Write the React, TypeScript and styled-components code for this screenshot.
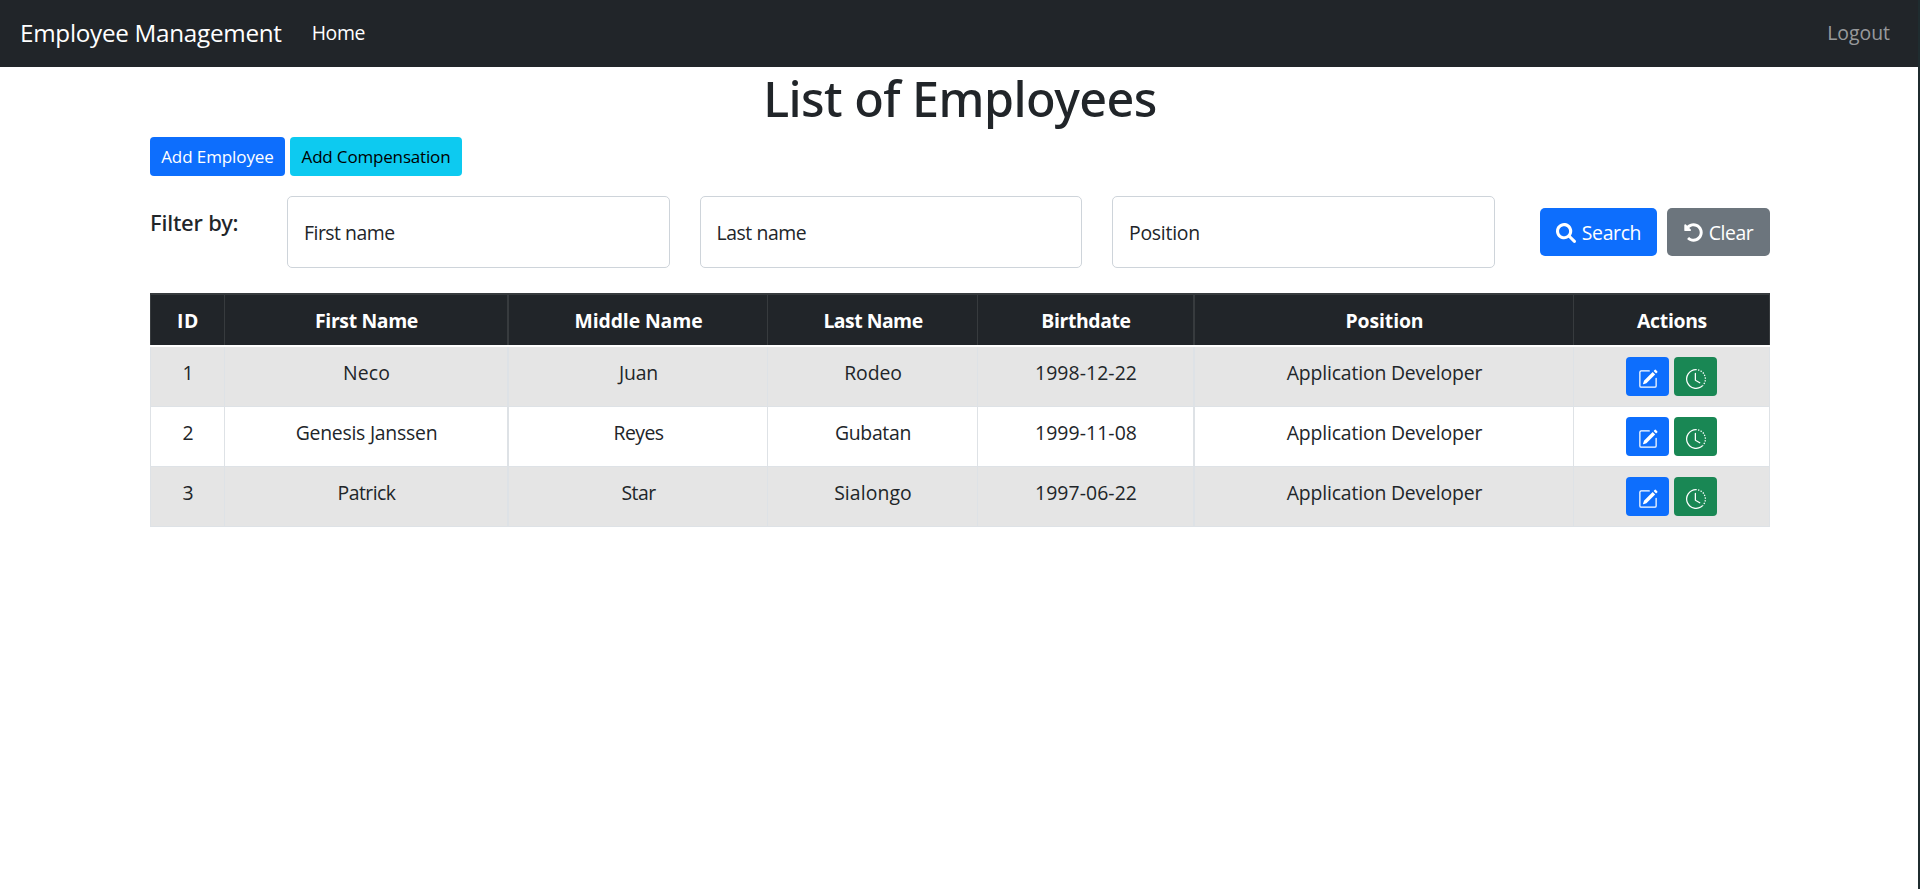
import React from "react";
import styled, { createGlobalStyle } from "styled-components";
import { BsClockHistory, BsPencilSquare } from "react-icons/bs";
import { FaUndoAlt } from "react-icons/fa";

const GlobalStyle = createGlobalStyle`
  *, *::before, *::after { box-sizing: border-box; }
  body {
    margin: 0;
    background: #fff;
    color: #212529;
    font-family: "Open Sans", "Noto Sans", sans-serif;
    font-size: 19.4px;
    line-height: 30px;
  }
  button { font-family: inherit; cursor: pointer; }
`;

const Page = styled.div`
  min-height: 889px;
  border-right: 2px solid #1f2c2f;
`;

const Navbar = styled.nav`
  display: flex;
  align-items: center;
  height: 67px;
  padding: 0 28px 1px 20px;
  background: #212529;
`;

const Brand = styled.a`
  color: #fff;
  font-size: 24.25px;
  letter-spacing: -0.29px;
`;

const NavLink = styled.a<{ $active?: boolean }>`
  color: ${(p) => (p.$active ? "#fff" : "rgba(255, 255, 255, 0.55)")};
  margin-left: ${(p) => (p.$active ? "30px" : "auto")};
  letter-spacing: ${(p) => (p.$active ? "-0.34px" : "0")};
`;

const Container = styled.main`
  width: 1620px;
  margin-left: 150px;
`;

const Title = styled.h1`
  margin: 0 0 9px;
  padding-top: 1px;
  font-family: "Noto Sans", sans-serif;
  font-size: 48.5px;
  font-weight: 500;
  line-height: 60px;
  letter-spacing: -0.55px;
  text-align: center;
`;

const ButtonRow = styled.div`
  display: flex;
  gap: 5px;
  margin-bottom: 20px;
`;

const tones = {
  primary: { background: "#0d6efd", color: "#fff" },
  info: { background: "#0dcaf0", color: "#000" },
  secondary: { background: "#6c757d", color: "#fff" },
  success: { background: "#198754", color: "#fff" },
};

type Tone = keyof typeof tones;

const BaseButton = styled.button<{ $tone: Tone; $width: number; $spacing?: number }>`
  display: inline-flex;
  align-items: center;
  justify-content: center;
  flex: none;
  width: ${(p) => p.$width}px;
  padding: 0;
  border: 0;
  background: ${(p) => tones[p.$tone].background};
  color: ${(p) => tones[p.$tone].color};
  letter-spacing: ${(p) => p.$spacing ?? 0}px;
`;

const SmallButton = styled(BaseButton)`
  height: 39px;
  border-radius: 4px;
  font-size: 17px;
`;

const LargeButton = styled(BaseButton)`
  height: 48px;
  gap: 6px;
  padding-top: 1px;
  border-radius: 5px;
  font-size: 19.4px;
`;

const IconButton = styled(SmallButton)`
  padding-top: 5px;
`;

const SearchGlyph = styled.svg`
  flex: none;
  width: 20px;
  height: 20px;
  fill: currentColor;
`;

const Filters = styled.form`
  display: flex;
  gap: 30px;
  height: 72px;
  margin-bottom: 25px;
`;

const FilterLabel = styled.h5`
  flex: none;
  width: 107px;
  margin: 0;
  padding-top: 11px;
  font-family: "Noto Sans", sans-serif;
  font-size: 22px;
  font-weight: 500;
  letter-spacing: -0.2px;
`;

const Field = styled.label<{ $spacing: number }>`
  display: flex;
  align-items: center;
  flex: none;
  width: 382.5px;
  padding: 2px 0 0 16px;
  border: 1px solid #ced4da;
  border-radius: 5px;
  letter-spacing: ${(p) => p.$spacing}px;
`;

const FilterActions = styled.div`
  display: flex;
  align-items: center;
  gap: 10px;
  margin-left: auto;
`;

const Table = styled.table`
  width: 1620px;
  table-layout: fixed;
  border-collapse: separate;
  border-spacing: 0;
  text-align: center;
`;

const Column = styled.col<{ $width: number }>`
  width: ${(p) => p.$width}px;
`;

const HeadCell = styled.th<{ $spacing: number; $rule: number }>`
  height: 52px;
  padding: 11px 0 0 1px;
  vertical-align: top;
  background: #212529;
  color: #fff;
  border-top: 2px solid #373b3e;
  border-right: ${(p) => p.$rule}px solid #373b3e;
  letter-spacing: ${(p) => p.$spacing}px;
  &:first-child { border-left: 1px solid #373b3e; }
`;

const DividerCell = styled.td`
  height: 2px;
  padding: 0;
  background: #fff;
`;

const Row = styled.tr`
  background: #fff;
  &:nth-child(odd) { background: #e5e5e5; }
`;

const Cell = styled.td<{ $spacing?: number; $rule: number }>`
  height: 60px;
  padding: 11px 0 0 1px;
  vertical-align: top;
  border-bottom: 1px solid #dee2e6;
  border-right: ${(p) => p.$rule}px solid #dee2e6;
  letter-spacing: ${(p) => p.$spacing ?? 0}px;
  &:first-child { border-left: 1px solid #dee2e6; }
`;

const ActionCell = styled(Cell)`
  padding: 10px 0 0;
`;

const CellActions = styled.div`
  display: flex;
  justify-content: center;
  gap: 5px;
`;

const columns = [
  { name: "ID", width: 75, spacing: 0.7, rule: 1 },
  { name: "First Name", width: 284, spacing: -0.35, rule: 2 },
  { name: "Middle Name", width: 259, spacing: -0.1, rule: 1 },
  { name: "Last Name", width: 210, spacing: -0.5, rule: 1 },
  { name: "Birthdate", width: 217, spacing: -0.39, rule: 2 },
  { name: "Position", width: 379, spacing: -0.1, rule: 1 },
  { name: "Actions", width: 196, spacing: -0.31, rule: 1 },
];

const employees: [string, number][][] = [
  [["1", 0], ["Neco", 0.1], ["Juan", -0.2], ["Rodeo", -0.1], ["1998-12-22", 0.08], ["Application Developer", -0.17]],
  [["2", 0], ["Genesis Janssen", -0.25], ["Reyes", -0.55], ["Gubatan", -0.3], ["1999-11-08", 0.08], ["Application Developer", -0.17]],
  [["3", 0], ["Patrick", -0.55], ["Star", -0.53], ["Sialongo", 0.1], ["1997-06-22", 0.08], ["Application Developer", -0.17]],
];

function SearchIcon() {
  return (
    <SearchGlyph viewBox="0 0 512 512" aria-hidden="true">
      <path d="M500.3 443.7l-119.7-119.7c27.22-40.41 40.65-90.9 33.46-144.7C401.8 87.79 326.8 13.32 235.2 1.723C99.01-15.51-15.51 99.01 1.724 235.2c11.6 91.64 86.08 166.7 177.6 178.9c53.8 7.189 104.3-6.236 144.7-33.46l119.7 119.7c15.62 15.62 40.95 15.62 56.57 0C515.9 484.7 515.9 459.3 500.3 443.7zM79.1 208c0-70.58 57.42-128 128-128s128 57.42 128 128c0 70.58-57.42 128-128 128S79.1 278.6 79.1 208z" />
    </SearchGlyph>
  );
}

export default function App() {
  return (
    <Page>
      <GlobalStyle />
      <Navbar>
        <Brand>Employee Management</Brand>
        <NavLink $active>Home</NavLink>
        <NavLink>Logout</NavLink>
      </Navbar>
      <Container>
        <Title>List of Employees</Title>
        <ButtonRow>
          <SmallButton $tone="primary" $width={135} $spacing={-0.09}>Add Employee</SmallButton>
          <SmallButton $tone="info" $width={172} $spacing={-0.17}>Add Compensation</SmallButton>
        </ButtonRow>
        <Filters>
          <FilterLabel>Filter by:</FilterLabel>
          <Field $spacing={-0.49}>First name</Field>
          <Field $spacing={-0.43}>Last name</Field>
          <Field $spacing={-0.25}>Position</Field>
          <FilterActions>
            <LargeButton type="button" $tone="primary" $width={117} $spacing={-0.34}>
              <SearchIcon />
              Search
            </LargeButton>
            <LargeButton type="button" $tone="secondary" $width={103} $spacing={-0.47}>
              <FaUndoAlt size={19} />
              Clear
            </LargeButton>
          </FilterActions>
        </Filters>
        <Table>
          <colgroup>
            {columns.map((c) => <Column key={c.name} $width={c.width} />)}
          </colgroup>
          <thead>
            <tr>
              {columns.map((c) => (
                <HeadCell key={c.name} $spacing={c.spacing} $rule={c.rule}>{c.name}</HeadCell>
              ))}
            </tr>
            <tr>
              <DividerCell colSpan={columns.length} />
            </tr>
          </thead>
          <tbody>
            {employees.map((cells) => (
              <Row key={cells[0][0]}>
                {cells.map(([text, spacing], i) => (
                  <Cell key={i} $spacing={spacing} $rule={columns[i].rule}>{text}</Cell>
                ))}
                <ActionCell $rule={1}>
                  <CellActions>
                    <IconButton $tone="primary" $width={43} aria-label="Edit">
                      <BsPencilSquare size={20} />
                    </IconButton>
                    <IconButton $tone="success" $width={43} aria-label="History">
                      <BsClockHistory size={20} />
                    </IconButton>
                  </CellActions>
                </ActionCell>
              </Row>
            ))}
          </tbody>
        </Table>
      </Container>
    </Page>
  );
}
